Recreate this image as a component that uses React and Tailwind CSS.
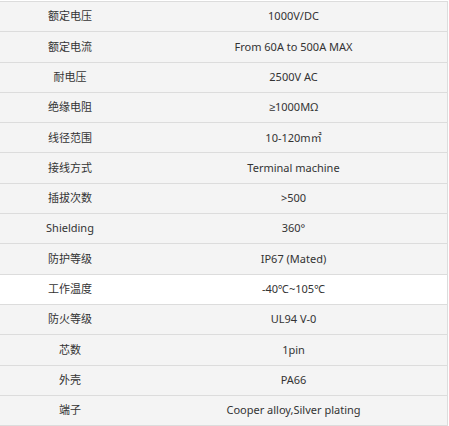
import React from 'react';

const rows = [
  ['额定电压', '1000V/DC'],
  ['额定电流', 'From 60A to 500A MAX'],
  ['耐电压', '2500V AC'],
  ['绝缘电阻', '≥1000MΩ'],
  ['线径范围', '10-120m㎡'],
  ['接线方式', 'Terminal machine'],
  ['插拔次数', '>500'],
  ['Shielding', '360°'],
  ['防护等级', 'IP67 (Mated)'],
  ['工作温度', '-40℃~105℃'],
  ['防火等级', 'UL94 V-0'],
  ['芯数', '1pin'],
  ['外壳', 'PA66'],
  ['端子', 'Cooper alloy,Silver plating'],
];

export default function App() {
  return (
    <div
      className="w-[449px] h-[426px] bg-white pt-px text-[11px] text-[#333]"
      style={{ fontFamily: '"Noto Sans", "Liberation Sans", "Noto Sans CJK SC", sans-serif' }}
    >
      <div className="w-[448px] border-t border-r border-[#dcdcdc]">
        {rows.map(([label, value], i) => (
          <div
            key={label}
            className={`flex h-[30.3px] items-center border-b border-[#dcdcdc] ${
              i === 9 ? 'bg-white' : 'bg-[#f4f4f4]'
            }`}
          >
            <div className="w-[140px] text-center">{label}</div>
            <div className="flex-1 text-center">{value}</div>
          </div>
        ))}
      </div>
    </div>
  );
}
